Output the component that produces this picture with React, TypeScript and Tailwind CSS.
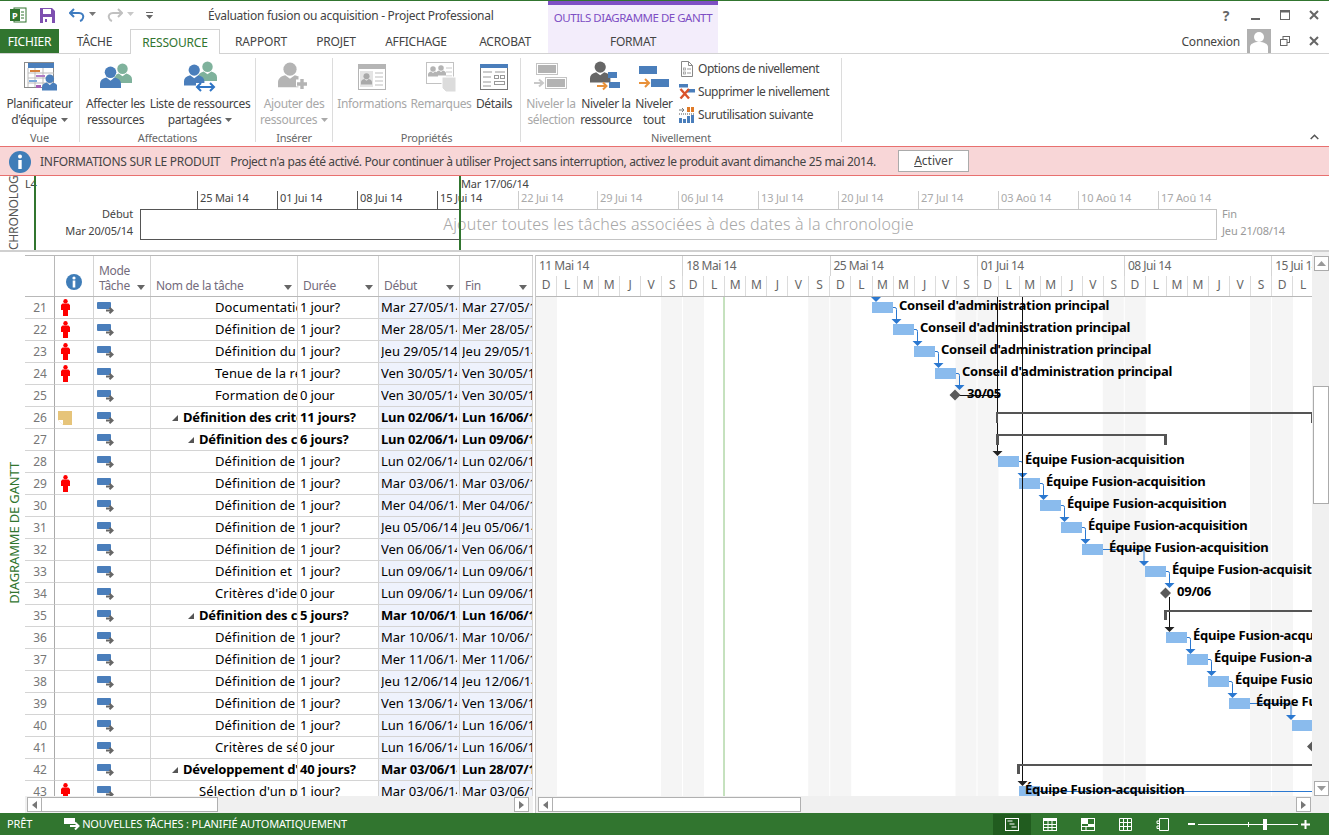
import React from "react";

const SANS = "font-['Noto_Sans','Open_Sans',sans-serif]";

type R = { n: number; p?: boolean; note?: boolean; name: string; lvl: number; b?: boolean; tri?: boolean; dur: string; deb: string; fin: string };
const rows: R[] = [
  { n: 21, p: true, name: "Documentation", lvl: 3, dur: "1 jour?", deb: "Mar 27/05/14", fin: "Mar 27/05/14" },
  { n: 22, p: true, name: "Définition de la", lvl: 3, dur: "1 jour?", deb: "Mer 28/05/14", fin: "Mer 28/05/14" },
  { n: 23, p: true, name: "Définition du plan", lvl: 3, dur: "1 jour?", deb: "Jeu 29/05/14", fin: "Jeu 29/05/14" },
  { n: 24, p: true, name: "Tenue de la réunion", lvl: 3, dur: "1 jour?", deb: "Ven 30/05/14", fin: "Ven 30/05/14" },
  { n: 25, name: "Formation de l'équipe", lvl: 3, dur: "0 jour", deb: "Ven 30/05/14", fin: "Ven 30/05/14" },
  { n: 26, note: true, name: "Définition des critères", lvl: 1, b: true, tri: true, dur: "11 jours?", deb: "Lun 02/06/14", fin: "Lun 16/06/14" },
  { n: 27, name: "Définition des critères", lvl: 2, b: true, tri: true, dur: "6 jours?", deb: "Lun 02/06/14", fin: "Lun 09/06/14" },
  { n: 28, name: "Définition de la", lvl: 3, dur: "1 jour?", deb: "Lun 02/06/14", fin: "Lun 02/06/14" },
  { n: 29, p: true, name: "Définition de la", lvl: 3, dur: "1 jour?", deb: "Mar 03/06/14", fin: "Mar 03/06/14" },
  { n: 30, name: "Définition de la", lvl: 3, dur: "1 jour?", deb: "Mer 04/06/14", fin: "Mer 04/06/14" },
  { n: 31, name: "Définition de la", lvl: 3, dur: "1 jour?", deb: "Jeu 05/06/14", fin: "Jeu 05/06/14" },
  { n: 32, name: "Définition de la", lvl: 3, dur: "1 jour?", deb: "Ven 06/06/14", fin: "Ven 06/06/14" },
  { n: 33, name: "Définition et", lvl: 3, dur: "1 jour?", deb: "Lun 09/06/14", fin: "Lun 09/06/14" },
  { n: 34, name: "Critères d'identification", lvl: 3, dur: "0 jour", deb: "Lun 09/06/14", fin: "Lun 09/06/14" },
  { n: 35, name: "Définition des critères", lvl: 2, b: true, tri: true, dur: "5 jours?", deb: "Mar 10/06/14", fin: "Lun 16/06/14" },
  { n: 36, name: "Définition de la", lvl: 3, dur: "1 jour?", deb: "Mar 10/06/14", fin: "Mar 10/06/14" },
  { n: 37, name: "Définition de la", lvl: 3, dur: "1 jour?", deb: "Mer 11/06/14", fin: "Mer 11/06/14" },
  { n: 38, name: "Définition de la", lvl: 3, dur: "1 jour?", deb: "Jeu 12/06/14", fin: "Jeu 12/06/14" },
  { n: 39, name: "Définition de la", lvl: 3, dur: "1 jour?", deb: "Ven 13/06/14", fin: "Ven 13/06/14" },
  { n: 40, name: "Définition de la", lvl: 3, dur: "1 jour?", deb: "Lun 16/06/14", fin: "Lun 16/06/14" },
  { n: 41, name: "Critères de sélection", lvl: 3, dur: "0 jour", deb: "Lun 16/06/14", fin: "Lun 16/06/14" },
  { n: 42, name: "Développement d'un", lvl: 1, b: true, tri: true, dur: "40 jours?", deb: "Mar 03/06/14", fin: "Lun 28/07/14" },
  { n: 43, p: true, name: "Sélection d'un partenaire", lvl: 2, dur: "1 jour?", deb: "Mar 03/06/14", fin: "Mar 03/06/14" },
];

const Person = ({ x, y, s = 1, c }: { x: number; y: number; s?: number; c: string }) => (
  <g transform={`translate(${x} ${y}) scale(${s})`} fill={c}>
    <circle cx="10" cy="6" r="5.5" />
    <path d="M0 21v-4c0-3 2-5 6-6l4 3 4-3c4 1 6 3 6 6v4z" />
  </g>
);

const Caret = ({ c = "#666" }: { c?: string }) => (
  <svg width="7" height="4" viewBox="0 0 7 4" className="inline-block ml-1 mb-[2px]"><path d="M0 0h7L3.5 4z" fill={c} /></svg>
);

const IconPlanner = () => (
  <svg width="34" height="32" viewBox="0 0 34 32">
    <rect x="1.5" y="1.5" width="29" height="25" fill="#fff" stroke="#8a8a8a" />
    <rect x="5" y="2" width="26" height="5" fill="#4a7ebb" />
    <path d="M5 7v19M12 7v19M20 7v19M5 12h26M5 17h26M5 22h26" stroke="#bbb" />
    <rect x="7" y="9" width="10" height="2" fill="#d6803a" /><rect x="13" y="14" width="9" height="2" fill="#b07cc6" />
    <rect x="6" y="19" width="8" height="2" fill="#7aa7d8" /><rect x="13" y="24" width="5" height="3" fill="#a55fb5" />
    <Person x={19} y={13} s={0.78} c="#4a7ebb" />
  </svg>
);
const IconAssign = () => (
  <svg width="34" height="28" viewBox="0 0 34 28">
    <Person x={14} y={0} s={0.95} c="#7fb29c" />
    <g><circle cx="11" cy="10" r="6.5" fill="#fff" /><Person x={1} y={3} s={1.05} c="#4a7ebb" /></g>
  </svg>
);
const IconShared = () => (
  <svg width="34" height="32" viewBox="0 0 34 32">
    <Person x={15} y={0} s={0.95} c="#7fb29c" />
    <Person x={1} y={3} s={1.02} c="#4a7ebb" />
    <path d="M13 25h18" stroke="#fff" strokeWidth="6" />
    <path d="M14 26h17M18 22l-4 4 4 4M27 22l4 4-4 4" stroke="#2f75c5" strokeWidth="2" fill="none" />
  </svg>
);
const IconAdd = () => (
  <svg width="34" height="32" viewBox="0 0 34 32">
    <Person x={1} y={1} s={1.2} c="#b4b4b4" />
    <path d="M19 22h12M25 16v12" stroke="#fff" strokeWidth="7" />
    <path d="M20 23h10M25 18v10" stroke="#b4b4b4" strokeWidth="3.4" />
  </svg>
);
const IconInfo = () => (
  <svg width="30" height="28" viewBox="0 0 30 28">
    <rect x="1.5" y="1.5" width="27" height="25" fill="#fff" stroke="#b5b5b5" />
    <rect x="1" y="1" width="28" height="5" fill="#b5b5b5" />
    <rect x="3" y="8" width="13" height="16" fill="#e4e4e4" />
    <Person x={4} y={10} s={0.55} c="#a9a9a9" />
    <path d="M18 10h8M18 14h8M18 18h8M18 22h8" stroke="#bdbdbd" />
  </svg>
);
const IconNotes = () => (
  <svg width="32" height="32" viewBox="0 0 32 32">
    <rect x="1.5" y="1.5" width="27" height="21" fill="#fff" stroke="#c2c2c2" />
    <Person x={3} y={5} s={0.5} c="#b4b4b4" /><Person x={11} y={4} s={0.5} c="#b4b4b4" />
    <path d="M21 7h6M21 11h6M21 15h6" stroke="#c8c8c8" />
    <path d="M17 16h14v15H21l-4-4z" fill="#dcdcdc" stroke="#fff" />
  </svg>
);
const IconDetails = () => (
  <svg width="30" height="28" viewBox="0 0 30 28">
    <rect x="1.5" y="1.5" width="27" height="25" fill="#fff" stroke="#777" />
    <rect x="1" y="1" width="28" height="4" fill="#4a7ebb" />
    <path d="M4 9h9M16 9h10M4 14h8M4 19h8M4 23h8" stroke="#999" />
    <rect x="15.5" y="12.5" width="4" height="3" fill="none" stroke="#999" /><rect x="21.5" y="12.5" width="4" height="3" fill="none" stroke="#999" />
    <rect x="15.5" y="18.5" width="10" height="3" fill="none" stroke="#999" />
  </svg>
);
const IconLevelSel = () => (
  <svg width="34" height="28" viewBox="0 0 34 28">
    <rect x="2.5" y="0.5" width="21" height="11" fill="#fff" stroke="#c4c4c4" /><rect x="4" y="2" width="18" height="8" fill="#b3b3b3" />
    <rect x="11.5" y="14.5" width="21" height="11" fill="#fff" stroke="#c4c4c4" /><rect x="13" y="16" width="18" height="8" fill="#b3b3b3" />
    <path d="M0 20h8M5 16.5 9 20l-4 3.5" stroke="#c8c8c8" strokeWidth="2" fill="none" />
  </svg>
);
const IconLevelRes = () => (
  <svg width="34" height="32" viewBox="0 0 34 32">
    <Person x={1} y={0} s={1.02} c="#666" />
    <rect x="19" y="11" width="9" height="6" fill="#4a7ebb" /><rect x="20" y="21" width="11" height="6" fill="#4a7ebb" />
    <path d="M8 25h9M14 21.5l3.5 3.5-3.5 3.5" stroke="#e8913a" strokeWidth="2" fill="none" />
  </svg>
);
const IconLevelAll = () => (
  <svg width="32" height="24" viewBox="0 0 32 24">
    <rect x="1" y="1" width="18" height="8" fill="#4a7ebb" /><rect x="13" y="14" width="18" height="8" fill="#4a7ebb" />
    <path d="M1 18h9M7 14l4 4-4 4" stroke="#e8913a" strokeWidth="2" fill="none" />
  </svg>
);
const IconOptions = () => (
  <svg width="14" height="16" viewBox="0 0 14 16">
    <path d="M1.5.5h7l4 4v11h-11z" fill="#fff" stroke="#888" /><path d="M8.5.5v4h4" fill="none" stroke="#888" />
    <rect x="3.5" y="7" width="2" height="2" fill="none" stroke="#999" strokeWidth=".8" /><rect x="3.5" y="11" width="2" height="2" fill="none" stroke="#999" strokeWidth=".8" />
    <path d="M7 8h4M7 12h4" stroke="#999" />
  </svg>
);
const IconClear = () => (
  <svg width="16" height="16" viewBox="0 0 16 16">
    <rect x="0" y="0" width="9" height="3.5" fill="#4a7ebb" /><rect x="8" y="5" width="8" height="3.5" fill="#4a7ebb" />
    <path d="M1.5 5 10 14.5M10 5l-8.5 9.5" stroke="#d9532c" strokeWidth="2.4" />
  </svg>
);
const IconOver = () => (
  <svg width="16" height="16" viewBox="0 0 16 16">
    <path d="M0 3h5M3 1l2 2-2 2" stroke="#777" fill="none" />
    <rect x="8" y="0" width="3" height="5" fill="#e07b28" /><rect x="12" y="0" width="3" height="5" fill="#e07b28" />
    <path d="M0 7h16" stroke="#555" strokeDasharray="1 1" />
    <rect x="0" y="11" width="3" height="5" fill="#4a7ebb" /><rect x="4" y="12" width="3" height="4" fill="#4a7ebb" /><rect x="8" y="9" width="3" height="7" fill="#4a7ebb" /><rect x="12" y="8" width="3" height="8" fill="#4a7ebb" />
  </svg>
);

const RBtn = ({ w, icon, l1, l2, off, caret }: { w: string; icon: React.ReactNode; l1: string; l2: string; off?: boolean; caret?: boolean }) => (
  <div className={`${w} flex flex-col items-center text-[12px] leading-[16px] tracking-[-0.35px] whitespace-nowrap ${off ? "text-[#a8a8a8]" : "text-[#444]"}`}>
    <div className="h-[38px] flex items-center justify-center">{icon}</div>
    <div>{l1}</div>
    <div>{l2}{caret && <Caret c={off ? "#aaa" : "#666"} />}</div>
  </div>
);

const Group = ({ w, label, children }: { w: string; label: string; children: React.ReactNode }) => (
  <div className={`${w} h-[84px] flex flex-col border-r border-[#dcdcdc] shrink-0`}>
    <div className="flex-1 flex min-h-0">{children}</div>
    <div className="text-center text-[11px] leading-[14px] mb-[-3px] text-[#666] tracking-[-0.2px]">{label}</div>
  </div>
);

const Small = ({ icon, t }: { icon: React.ReactNode; t: string }) => (
  <div className="h-[23px] flex items-center gap-[3px] text-[12px] text-[#444] tracking-[-0.45px] whitespace-nowrap">
    <div className="w-[17px] flex justify-center">{icon}</div>{t}
  </div>
);

const ModeIcon = () => (
  <svg width="17" height="13" viewBox="0 0 17 13">
    <rect x="0" y="1" width="14" height="7" rx="1" fill="#4a7ebb" />
    <path d="M9 9.5h6M12.5 6.8 15.5 9.5l-3 2.7" stroke="#666" strokeWidth="2" fill="none" />
  </svg>
);
const RedMan = () => (
  <svg width="9" height="17" viewBox="0 0 9 17"><circle cx="4.5" cy="2.2" r="2.2" fill="#f00" /><path d="M1.500 4.500h6L9 6v5H7v6H2v-6H0V6z" fill="#f00" /></svg>
);
const NoteIcon = () => (
  <svg width="14" height="14" viewBox="0 0 14 14"><path d="M0 0h14v14H5L0 9z" fill="#e6c47a" /><path d="M0 9h5v5z" fill="#fff" /></svg>
);

const Row = ({ r }: { r: R }) => (
  <div className={`flex h-[22px] shrink-0 text-[13px] leading-[21px] text-black whitespace-nowrap ${r.b ? "font-bold tracking-[-0.15px]" : ""}`}>
    <div className="w-[29px] shrink-0 border-b border-[#d4d4d4] text-[12px] font-normal text-[#777] text-center pl-[1px] tracking-normal">{r.n}</div>
    <div className="w-[40px] shrink-0 border-l border-l-[#aaa] border-r border-[#d4d4d4] border-b flex items-center pl-[6px]">
      {r.p && <RedMan />}
      {r.note && <div className="ml-[-3px]"><NoteIcon /></div>}
    </div>
    <div className="w-[57px] shrink-0 border-r border-b border-[#d4d4d4] flex items-center pl-[3px]"><ModeIcon /></div>
    <div className={`w-[147px] shrink-0 border-r border-b border-[#d4d4d4] overflow-hidden flex items-center ${r.b ? "" : "tracking-[0.12px]"} ${r.lvl === 3 ? "pl-[64px]" : r.lvl === 2 ? "pl-[36px]" : "pl-[20px]"}`}>
      {r.tri ? <svg width="8" height="8" viewBox="0 0 8 8" className="mr-[4px] shrink-0"><path d="M7 1v6H1z" fill="#555" /></svg> : r.lvl === 2 ? <span className="w-[12px] shrink-0" /> : null}
      <span>{r.name}</span>
    </div>
    <div className={`w-[81px] shrink-0 border-r border-b border-[#d4d4d4] pl-[2px] overflow-hidden ${r.b ? "" : "tracking-[-0.15px]"}`}>{r.dur}</div>
    <div className="w-[81px] shrink-0 border-r border-b border-[#d4d4d4] bg-[#eef2fc] pl-[2px] pr-[2px]"><div className="overflow-hidden">{r.deb}</div></div>
    <div className="w-[73px] shrink-0 border-r border-b border-[#d4d4d4] bg-[#eef2fc] pl-[2px]"><div className="overflow-hidden">{r.fin}</div></div>
  </div>
);

const HeadCell = ({ w, t, t2, noCaret }: { w: string; t: string; t2?: string; noCaret?: boolean }) => (
  <div className={`${w} shrink-0 border-r border-[#d4d4d4] px-[5px] flex flex-col justify-end pb-[3px] text-[12px] leading-[15px] text-[#746b7c] tracking-[-0.3px] relative whitespace-nowrap`}>
    {t2 && <div>{t2}</div>}
    <div className="flex items-center justify-between"><span>{t}</span>{!noCaret && <svg width="8" height="5" viewBox="0 0 8 5" className="mt-[3px]"><path d="M0 0h8L4 5z" fill="#666" /></svg>}</div>
  </div>
);

const Sb = ({ d, cls }: { d: "l" | "r"; cls?: string }) => (
  <div className={`w-[15px] h-[15px] border border-[#b0b0b0] bg-white flex items-center justify-center shrink-0 ${cls ?? ""}`}>
    <svg width="5" height="8" viewBox="0 0 5 8"><path d={d === "l" ? "M5 0v8L0 4z" : "M0 0v8l5-4z"} fill="#777" /></svg>
  </div>
);

const WEEK = 147.25;
const days = ["D", "L", "M", "M", "J", "V", "S"];
const weeks = ["11 Mai 14", "18 Mai 14", "25 Mai 14", "01 Jui 14", "08 Jui 14", "15 Jui 14"];
const allDays = Array.from({ length: 37 }, (_, i) => days[i % 7]);

type Bar = [number, number];
const bars: Bar[] = [[872, 0], [893, 1], [914, 2], [935, 3], [998, 7], [1019, 8], [1040, 9], [1061, 10], [1082, 11], [1145, 12], [1166, 15], [1187, 16], [1208, 17], [1229, 18], [1292, 19], [1019, 22]];
const labels: [number, number, string][] = [
  [899, 0, "Conseil d'administration principal"], [920, 1, "Conseil d'administration principal"], [941, 2, "Conseil d'administration principal"], [962, 3, "Conseil d'administration principal"],
  [967, 4, "30/05"],
  [1025, 7, "Équipe Fusion-acquisition"], [1046, 8, "Équipe Fusion-acquisition"], [1067, 9, "Équipe Fusion-acquisition"], [1088, 10, "Équipe Fusion-acquisition"], [1109, 11, "Équipe Fusion-acquisition"], [1172, 12, "Équipe Fusion-acquisition"],
  [1177, 13, "09/06"],
  [1193, 15, "Équipe Fusion-acquisition"], [1214, 16, "Équipe Fusion-acquisition"], [1235, 17, "Équipe Fusion-acquisition"], [1256, 18, "Équipe Fusion-acquisition"],
  [1025, 22, "Équipe Fusion-acquisition"],
];
const short: [number, number][] = [[893, 0], [914, 1], [935, 2], [956, 3], [1019, 7], [1040, 8], [1061, 9], [1082, 10], [1166, 12], [1187, 15], [1208, 16], [1229, 17]];

const Tri = ({ x, y, c }: { x: number; y: number; c: string }) => <path d={`M${x - 5} ${y - 5}h10l-5 5z`} fill={c} />;

const Chart = () => (
  <svg width="776" height="499" viewBox="536 297 776 499" className="block" style={{ fontFamily: "'Noto Sans', sans-serif" }}>
    <rect x="536" y="297" width="21" height="499" fill="#f5f5f5" />
    {[0, 1, 2, 3, 4].map((k) => (
      <g key={k}>
        <rect x={661 + WEEK * k} y="297" width="21" height="499" fill="#f5f5f5" />
        <rect x={683 + WEEK * k} y="297" width="21" height="499" fill="#f5f5f5" />
      </g>
    ))}
    <path d="M724 297v499" stroke="#8cc47e" />
    {bars.map(([x, i]) => <rect key={`${x}-${i}`} x={x} y={302 + i * 22} width={i === 19 ? 20 : 21} height="11" fill="#8abbed" />)}
    {short.map(([x, i]) => (
      <g key={`${x}${i}`}>
        <path d={`M${x} ${307.5 + i * 22}h2q1.5 0 1.5 2V${320 + i * 22}`} fill="none" stroke="#2b78d0" />
        <Tri x={x + 3.5} y={324 + i * 22} c="#2b78d0" />
      </g>
    ))}
    <Tri x={876} y={302} c="#2b78d0" />
    <path d="M1103 549.5h41v12M1250 703.5h41v12" fill="none" stroke="#2b78d0" />
    <Tri x={1144} y={566} c="#2b78d0" /><Tri x={1291} y={720} c="#2b78d0" />
    <path d="M1040 791.5h272" stroke="#2b78d0" />
    <path d="M997.5 297v155M1022.5 297v486M1169.5 597v31M955 395.5h45" stroke="#111" fill="none" />
    <Tri x={997.5} y={456} c="#222" /><Tri x={1022.5} y={786} c="#222" /><Tri x={1169.5} y={632} c="#222" />
    <path d="M996 423v-11h316v2H998v9zM996 445v-11h171v11h-3v-9H999v9zM1164 620v-10h148v2h-145v8zM1017 774v-10h295v2H1020v8z" fill="#555" />
    <path d="M1311 414h1v9h-1z" fill="#555" />
    <path d="M955 389.500l5.500 5.500-5.500 5.500-5.500-5.500zM1165.500 587.500l5.500 5.500-5.500 5.500-5.500-5.500zM1312.500 741l5.500 5.500-5.500 5.500-5.500-5.500z" fill="#5a5a5a" />
    {labels.map(([x, i, t]) => (
      <text key={`${x}-${i}`} x={x} y={310 + i * 22} fontSize="13" fontWeight="700" fill="#000" letterSpacing="-0.24">{t}</text>
    ))}
  </svg>
);

const tlLabels: [number, string][] = [[198, "25 Mai 14"], [278, "01 Jui 14"], [358, "08 Jui 14"], [438, "15 Jui 14"], [519, "22 Jui 14"], [598, "29 Jui 14"], [679, "06 Jul 14"], [759, "13 Jul 14"], [839, "20 Jul 14"], [919, "27 Jul 14"], [999, "03 Aoû 14"], [1079, "10 Aoû 14"], [1159, "17 Aoû 14"]];

export default function App() {
  return (
    <div className={`${SANS} w-[1329px] h-[835px] overflow-hidden bg-white flex flex-col relative`}>
      {/* Barre de titre */}
      <div className="h-[29px] shrink-0 border-t border-[#31752f] flex items-center relative">
        <div className="w-[548px] flex items-center shrink-0 pl-[10px]">
          <svg width="17" height="16" viewBox="0 0 17 16"><rect x="4" y="1" width="12" height="14" fill="#fff" stroke="#31752f" /><rect x="0" y="2" width="10" height="12" fill="#31752f" /><text x="2" y="11.5" fontSize="9" fontWeight="700" fill="#fff">P</text><path d="M11 5h3M11 8h3M11 11h3" stroke="#31752f" /></svg>
          <svg width="15" height="15" viewBox="0 0 15 15" className="ml-[13px]"><path d="M0 0h12l3 3v12H0z" fill="#7e4fb0" /><rect x="3" y="1" width="8" height="5" fill="#fff" /><rect x="3" y="9" width="9" height="6" fill="#fff" /><rect x="5" y="11" width="2" height="3" fill="#7e4fb0" /></svg>
          <svg width="16" height="14" viewBox="0 0 16 14" className="ml-[14px]"><path d="M5 1 1 5l4 4" fill="none" stroke="#3f7cc0" strokeWidth="2" /><path d="M2 5h8c3 0 5 2 4 5-.4 1.300-1.500 2.500-3 3" fill="none" stroke="#3f7cc0" strokeWidth="2" /></svg>
          <Caret c="#777" />
          <svg width="16" height="14" viewBox="0 0 16 14" className="ml-[11px]"><path d="M11 1l4 4-4 4" fill="none" stroke="#c0c0c0" strokeWidth="2" /><path d="M14 5H6c-3 0-5 2-4 5 .4 1.300 1.500 2.500 3 3" fill="none" stroke="#c0c0c0" strokeWidth="2" /></svg>
          <Caret c="#c8c8c8" />
          <svg width="7" height="7" viewBox="0 0 7 7" className="ml-[12px]"><path d="M0 0h7v1H0zM0 3h7L3.500 7z" fill="#666" /></svg>
          <span className="ml-[55px] mt-[1px] text-[12px] text-[#444] tracking-[-0.28px] whitespace-nowrap">Évaluation fusion ou acquisition - Project Professional</span>
        </div>
        <div className="w-[170px] h-[28px] shrink-0 bg-[#f3edfb] border-t-[4px] border-[#7e4fc4] text-center text-[11.5px] leading-[25px] text-[#7e4fc4] tracking-[-0.5px] whitespace-nowrap">OUTILS DIAGRAMME DE GANTT</div>
        <div className="ml-auto flex items-center text-[#666]">
          <span className="text-[14px] font-bold w-[8px] mr-[21px] flex justify-center">?</span>
          <svg width="9" height="10" viewBox="0 0 9 10" className="mr-[20px]"><path d="M0 8h9v2H0z" fill="#666" /></svg>
          <svg width="10" height="10" viewBox="0 0 10 10" className="mr-[19px]"><rect x=".5" y=".5" width="9" height="9" fill="none" stroke="#666" /><path d="M0 1.500h10" stroke="#666" strokeWidth="2" /></svg>
          <svg width="10" height="10" viewBox="0 0 10 10" className="mr-[10px]"><path d="M1 1l8 8M9 1l-8 8" stroke="#666" strokeWidth="2" /></svg>
        </div>
      </div>
      {/* Onglets */}
      <div className="h-[25px] shrink-0 flex text-[12px] leading-[25px] text-[#444] border-b border-[#d2d2d2] relative tracking-[-0.2px]">
        <div className="w-[59px] bg-[#31752f] text-white text-center">FICHIER</div>
        <div className="w-[71px] text-center">TÂCHE</div>
        <div className="w-[90px] h-[25px] bg-white border border-b-0 border-[#d2d2d2] text-center text-[#31752f]">RESSOURCE</div>
        <div className="w-[82px] text-center">RAPPORT</div>
        <div className="w-[68px] text-center">PROJET</div>
        <div className="w-[92px] text-center">AFFICHAGE</div>
        <div className="w-[86px] text-center">ACROBAT</div>
        <div className="w-[170px] bg-[#f3edfb] text-center">FORMAT</div>
        <div className="ml-auto flex items-center pr-[10px]">
          <span className="mr-[7px]">Connexion</span>
          <div className="w-[24px] h-[24px] bg-[#b0b0b0] overflow-hidden"><svg width="24" height="24" viewBox="0 0 24 24"><circle cx="12" cy="8" r="5" fill="#fff" /><path d="M3 24v-6c0-3 4-5 9-5s9 2 9 5v6z" fill="#fff" /></svg></div>
          <svg width="10" height="10" viewBox="0 0 10 10" className="ml-[9px]"><rect x="3" y=".5" width="6.500" height="6" fill="none" stroke="#666" /><rect x=".5" y="3.500" width="6.500" height="6" fill="#fff" stroke="#666" /></svg>
          <svg width="10" height="10" viewBox="0 0 10 10" className="ml-[19px]"><path d="M1 1l8 8M9 1l-8 8" stroke="#666" strokeWidth="2" /></svg>
        </div>
      </div>
      {/* Ruban */}
      <div className="h-[92px] shrink-0 flex items-start pt-[4px] relative">
        <Group w="w-[80px]" label="Vue"><RBtn w="w-[79px]" icon={<IconPlanner />} l1="Planificateur" l2="d'équipe" caret /></Group>
        <Group w="w-[176px]" label="Affectations">
          <RBtn w="w-[71px]" icon={<IconAssign />} l1="Affecter les" l2="ressources" />
          <RBtn w="w-[98px]" icon={<IconShared />} l1="Liste de ressources" l2="partagées" caret />
        </Group>
        <Group w="w-[77px]" label="Insérer"><RBtn w="w-[76px]" off icon={<IconAdd />} l1="Ajouter des" l2="ressources" caret /></Group>
        <Group w="w-[188px]" label="Propriétés">
          <div className="w-[5px]" />
          <RBtn w="w-[68px]" off icon={<IconInfo />} l1="Informations" l2="" />
          <RBtn w="w-[70px]" off icon={<IconNotes />} l1="Remarques" l2="" />
          <RBtn w="w-[36px]" icon={<IconDetails />} l1="Détails" l2="" />
        </Group>
        <Group w="w-[321px]" label="Nivellement">
          <RBtn w="w-[60px]" off icon={<IconLevelSel />} l1="Niveler la" l2="sélection" />
          <RBtn w="w-[50px]" icon={<IconLevelRes />} l1="Niveler la" l2="ressource" />
          <RBtn w="w-[46px]" icon={<IconLevelAll />} l1="Niveler" l2="tout" />
          <div className="pl-[1px] mt-[-1px]">
            <Small icon={<IconOptions />} t="Options de nivellement" />
            <Small icon={<IconClear />} t="Supprimer le nivellement" />
            <Small icon={<IconOver />} t="Surutilisation suivante" />
          </div>
        </Group>
        <svg width="9" height="6" viewBox="0 0 9 6" className="absolute right-[10px] bottom-[6px]"><path d="M.7 5 4.500 1.300 8.300 5" fill="none" stroke="#555" strokeWidth="1.500" /></svg>
      </div>
      {/* Message */}
      <div className="h-[30px] shrink-0 bg-[#f8d6d7] border-y border-[#e8706f] flex items-center pl-[9px] pt-[1px] text-[12px] text-[#444] whitespace-nowrap relative">
        <svg width="22" height="22" viewBox="0 0 22 22"><circle cx="11" cy="11" r="11" fill="#3f7db8" /><circle cx="11" cy="5.500" r="2" fill="#fff" /><rect x="9.300" y="9" width="3.400" height="9" fill="#fff" /></svg>
        <span className="ml-[9px] tracking-[-0.26px]">INFORMATIONS SUR LE PRODUIT</span>
        <span className="ml-[10px] tracking-[-0.38px]">Project n'a pas été activé. Pour continuer à utiliser Project sans interruption, activez le produit avant dimanche 25 mai 2014.</span>
        <div className="absolute left-[898px] top-[3px] w-[71px] h-[22px] bg-white border border-[#ababab] text-center leading-[20px] text-[#444]"><span className="underline">A</span>ctiver</div>
      </div>
      {/* Chronologie */}
      <div className="h-[76px] shrink-0 relative border-b-2 border-[#d0d0d0] text-[11px] text-[#444] whitespace-nowrap tracking-[-0.15px] overflow-hidden">
        <div className="absolute left-[6px] top-0 bottom-0 w-[16px] flex flex-col justify-end overflow-hidden">
          <div className="[writing-mode:vertical-rl] rotate-180 text-[12px] leading-[16px] text-[#555] shrink-0">CHRONOLOGIE</div>
        </div>
        <div className="absolute left-[25px] top-[1px] leading-[14px]">L4</div>
        <div className="absolute left-[34px] top-0 bottom-0 w-[2px] bg-[#31752f]" />
        {tlLabels.map(([x, t]) => (
          <div key={x} className={`absolute top-[15px] h-[19px] border-l pl-[2px] leading-[14px] ${x < 460 ? "border-[#555]" : "border-[#ccc] text-[#aaa]"}`} style={{ left: x - 1 }}>{t}</div>
        ))}
        <div className="absolute left-[140px] top-[33px] w-[1077px] h-[31px] border border-[#c4c4c4] bg-white text-center text-[16px] leading-[28px] text-[#a8a8a8] font-light tracking-[0.16px]">Ajouter toutes les tâches associées à des dates à la chronologie</div>
        <div className="absolute left-[140px] top-[33px] w-[320px] h-[31px] border border-r-0 border-[#555]" />
        <div className="absolute left-[459px] top-0 bottom-0 w-[2px] bg-[#31752f]" />
        <div className="absolute left-[461px] top-[1px] leading-[14px]">Mar 17/06/14</div>
        <div className="absolute right-[1196px] top-[31px] leading-[14px]">Début</div>
        <div className="absolute right-[1196px] top-[48px] leading-[14px]">Mar 20/05/14</div>
        <div className="absolute left-[1222px] top-[31px] leading-[14px] text-[#999]">Fin</div>
        <div className="absolute left-[1222px] top-[48px] leading-[14px] text-[#999]">Jeu 21/08/14</div>
      </div>
      {/* Principal */}
      <div className="flex-1 min-h-0 flex relative">
        <div className="w-[25px] shrink-0 flex items-center justify-center">
          <div className="[writing-mode:vertical-rl] rotate-180 text-[13px] leading-[16px] text-[#31752f] whitespace-nowrap tracking-[-0.15px] ml-[2px]">DIAGRAMME DE GANTT</div>
        </div>
        {/* Table */}
        <div className="w-[508px] shrink-0 flex flex-col pt-[3px]">
          <div className="h-[42px] shrink-0 flex border-t border-b border-[#b8b8b8]">
            <div className="w-[29px] shrink-0" />
            <div className="w-[40px] shrink-0 border-l border-l-[#b8b8b8] border-r border-[#d4d4d4] flex items-end justify-center pb-[6px]">
              <svg width="16" height="16" viewBox="0 0 16 16" className="ml-[-1px]"><circle cx="8" cy="8" r="8" fill="#3f7db8" /><circle cx="8" cy="4" r="1.600" fill="#fff" /><rect x="6.700" y="6.500" width="2.600" height="7" fill="#fff" /></svg>
            </div>
            <HeadCell w="w-[57px]" t="Tâche" t2="Mode" />
            <HeadCell w="w-[147px]" t="Nom de la tâche" />
            <HeadCell w="w-[81px]" t="Durée" />
            <HeadCell w="w-[81px]" t="Début" />
            <HeadCell w="w-[73px]" t="Fin" />
          </div>
          <div className="h-[499px] overflow-hidden flex flex-col">
            {rows.map((r) => <Row key={r.n} r={r} />)}
          </div>
          <div className="h-[17px] shrink-0 bg-[#f0f0f0] flex items-start pt-[1px] pl-[2px]">
            <Sb d="l" />
            <div className="w-[176px] h-[15px] bg-white border border-[#b0b0b0] border-l-0" />
            <div className="flex-1" />
            <Sb d="r" cls="mr-[4px]" />
          </div>
        </div>
        <div className="w-[3px] shrink-0 mt-[3px] bg-white border-r border-[#c8c8c8]" />
        {/* Gantt */}
        <div className="w-[776px] shrink-0 flex flex-col pt-[3px]">
          <div className="h-[42px] shrink-0 border-t border-b border-[#b8b8b8] overflow-hidden text-[#666] text-[12px] whitespace-nowrap">
            <div className="flex h-[20px] leading-[20px] tracking-[-0.5px]">
              {weeks.map((w) => <div key={w} className="w-[147.25px] shrink-0 border-r border-[#d4d4d4] pl-[3px]">{w}</div>)}
            </div>
            <div className="flex h-[20px] leading-[18px]">
              {allDays.map((d, i) => <div key={i} className="w-[21.04px] shrink-0 text-center border-r border-[#dcdcdc]">{d}</div>)}
            </div>
          </div>
          <div className="h-[499px] overflow-hidden"><Chart /></div>
          <div className="h-[17px] shrink-0 bg-[#f0f0f0] flex items-start pt-[1px] pl-[2px]">
            <Sb d="l" />
            <div className="w-[248px] h-[15px] bg-white border border-[#b0b0b0] border-l-0" />
            <div className="flex-1" />
            <Sb d="r" cls="mr-[1px]" />
          </div>
        </div>
        {/* Ascenseur vertical */}
        <div className="w-[17px] shrink-0 flex flex-col bg-[#f0f0f0] pt-[4px] pb-[17px] items-end">
          <div className="w-[15px] h-[15px] border border-[#ababab] bg-white flex items-center justify-center"><svg width="9" height="5" viewBox="0 0 9 5"><path d="M0 5h9L4.500 0z" fill="#999" /></svg></div>
          <div className="flex-1 w-full relative">
            <div className="absolute top-[115px] left-[1px] w-[16px] h-[118px] bg-white border border-[#ababab]" />
          </div>
          <div className="w-[15px] h-[15px] border border-[#ababab] bg-white flex items-center justify-center"><svg width="9" height="5" viewBox="0 0 9 5"><path d="M0 0h9L4.500 5z" fill="#999" /></svg></div>
        </div>
      </div>
      {/* Barre d'état */}
      <div className="h-[22px] shrink-0 bg-[#31752f] flex items-center text-[11px] text-white whitespace-nowrap tracking-[-0.15px] relative">
        <span className="ml-[7px]">PRÊT</span>
        <svg width="16" height="12" viewBox="0 0 16 12" className="ml-[32px]"><rect x="0" y="0" width="11" height="6" fill="#fff" /><path d="M6 8h8M11 4.500 14.500 8 11 11.500" stroke="#fff" strokeWidth="2" fill="none" /></svg>
        <span className="ml-[2px]">NOUVELLES TÂCHES : PLANIFIÉ AUTOMATIQUEMENT</span>
        <div className="ml-auto flex items-center h-full pr-[19px]">
          <div className="w-[38px] h-[21px] bg-[#215c1f] flex items-center justify-center"><svg width="14" height="13" viewBox="0 0 14 13"><rect x=".5" y=".5" width="13" height="12" fill="none" stroke="#fff" /><path d="M2.500 3h5M4.500 6h5M6.500 9h5" stroke="#fff" /></svg></div>
          <div className="w-[38px] flex justify-center"><svg width="14" height="13" viewBox="0 0 14 13"><rect x=".5" y=".5" width="13" height="12" fill="none" stroke="#fff" /><rect x="0" y="0" width="14" height="3" fill="#fff" /><path d="M5 3v10M9 3v10M0 6.500h14M0 9.500h14" stroke="#fff" /></svg></div>
          <div className="w-[38px] flex justify-center"><svg width="14" height="13" viewBox="0 0 14 13"><rect x=".5" y=".5" width="13" height="12" fill="none" stroke="#fff" /><rect x="0" y="0" width="7" height="6" fill="#fff" /><rect x="7" y="6" width="7" height="3" fill="#fff" /><path d="M0 8.500h14M5 9v4" stroke="#fff" /></svg></div>
          <div className="w-[37px] flex justify-center"><svg width="13" height="13" viewBox="0 0 13 13"><path d="M.5.500h12v12H.5zM4.500 0v13M8.500 0v13M0 4.500h13M0 8.500h13" fill="none" stroke="#fff" /></svg></div>
          <div className="w-[37px] flex justify-center"><svg width="13" height="13" viewBox="0 0 13 13"><path d="M3.500.500h9v12h-9zM3.500 3H1v2.500h2.500M3.500 8H1v2.500h2.500" fill="none" stroke="#fff" /></svg></div>
          <div className="w-[7px] h-[2px] bg-white ml-[7px]" />
          <div className="w-[100px] h-[1px] bg-white mx-[3px] relative">
            <div className="absolute left-[50px] top-[-2px] w-[1px] h-[5px] bg-white" />
            <div className="absolute left-[65px] top-[-5px] w-[4px] h-[11px] bg-white" />
          </div>
          <svg width="9" height="9" viewBox="0 0 9 9"><path d="M0 3.500h9v2H0zM3.500 0h2v9h-2z" fill="#fff" /></svg>
        </div>
      </div>
    </div>
  );
}
